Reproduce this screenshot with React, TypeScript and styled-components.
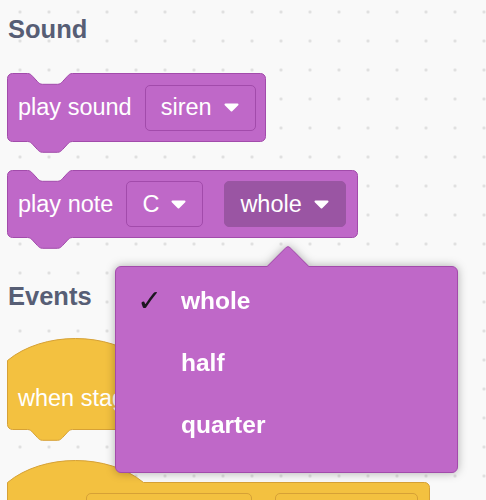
import styled, { createGlobalStyle } from "styled-components";

const GlobalStyle = createGlobalStyle`
  body {
    margin: 0;
    background: #f9f9f9;
    font-family: "Liberation Sans", Arial, sans-serif;
  }
`;

const colors = {
  purple: "#bf68c8",
  purpleLine: "#a24bab",
  purpleDark: "#9a55a3",
  yellow: "#f3c140",
  yellowLine: "#d6a136",
  heading: "#575e75",
};

// scratch-blocks puzzle notch, scaled
const SX = 1.25;
const SY = 1.35;
const NOTCH_START = 20;
const NOTCH_W = 36 * SX;
const R = 5;
const HAT_W = 136;

function notch(dir: 1 | -1) {
  const x = (v: number) => (v * SX * dir).toFixed(2);
  const y = (v: number) => (v * SY).toFixed(2);
  return `c ${x(2)},0 ${x(3)},${y(1)} ${x(4)},${y(2)} l ${x(4)},${y(4)} c ${x(1)},${y(1)} ${x(2)},${y(2)} ${x(4)},${y(2)} h ${x(12)} c ${x(2)},0 ${x(3)},${y(-1)} ${x(4)},${y(-2)} l ${x(4)},${y(-4)} c ${x(1)},${y(-1)} ${x(2)},${y(-2)} ${x(4)},${y(-2)}`;
}

function bottom(w: number, h: number) {
  return `V ${h - R} A ${R} ${R} 0 0 1 ${w - R} ${h} H ${NOTCH_START + NOTCH_W} ${notch(-1)} H ${R} A ${R} ${R} 0 0 1 0 ${h - R} Z`;
}

function stackPath(w: number, h: number) {
  return `M 0 ${R} A ${R} ${R} 0 0 1 ${R} 0 H ${NOTCH_START} ${notch(1)} H ${w - R} A ${R} ${R} 0 0 1 ${w} ${R} ${bottom(w, h)}`;
}

function hatPath(w: number, h: number, hat: number) {
  const k = hat / 0.75;
  return `M 0 ${hat} c ${(HAT_W * 25) / 96},${-k} ${(HAT_W * 71) / 96},${-k} ${HAT_W},0 H ${w - R} A ${R} ${R} 0 0 1 ${w} ${hat + R} ${bottom(w, h)}`;
}

const Page = styled.div`
  position: relative;
  width: 486px;
  height: 500px;
  overflow: hidden;
  box-sizing: border-box;
  padding: 14px 0 0 7px;
  display: flex;
  flex-direction: column;
  align-items: flex-start;
  background-color: #f9f9f9;
  background-image: radial-gradient(circle, #dcdcdc 1.1px, transparent 1.7px);
  background-size: 29px 29px;
  background-position: 5.5px -2.5px;
`;

const Heading = styled.h2<{ $mt: number }>`
  margin: ${(p) => p.$mt}px 0 0 1px;
  font-size: 25.5px;
  line-height: 30px;
  font-weight: 700;
  color: ${colors.heading};
`;

const Block = styled.div<{ $w: number; $h: number; $mt: number; $hat?: number }>`
  position: relative;
  width: ${(p) => p.$w}px;
  height: ${(p) => p.$h}px;
  margin-top: ${(p) => p.$mt}px;
  padding: ${(p) => p.$hat || 0}px 11px 0;
  box-sizing: border-box;
  flex-shrink: 0;
`;

const Shape = styled.svg`
  position: absolute;
  top: 0;
  left: 0;
  overflow: visible;
`;

const Row = styled.div`
  position: relative;
  height: 100%;
  display: flex;
  align-items: center;
  gap: 13px;
  color: #fff;
  font-size: 23.5px;
  white-space: nowrap;
`;

const Label = styled.span<{ $dy?: number }>`
  position: relative;
  top: ${(p) => p.$dy || 0}px;
`;

const Field = styled.div<{ $tone: "purple" | "dark" | "yellow"; $w?: number; $ml?: number }>`
  display: flex;
  align-items: center;
  gap: 12px;
  height: 46px;
  box-sizing: border-box;
  width: ${(p) => (p.$w ? `${p.$w}px` : "auto")};
  margin-left: ${(p) => p.$ml || 0}px;
  padding: 0 16px 0 15px;
  border-radius: 5px;
  border: 1px solid
    ${(p) =>
      p.$tone === "dark" ? colors.purpleDark : p.$tone === "yellow" ? colors.yellowLine : colors.purpleLine};
  background: ${(p) =>
    p.$tone === "dark" ? colors.purpleDark : p.$tone === "yellow" ? colors.yellow : colors.purple};
`;

const Menu = styled.div`
  position: absolute;
  left: 115px;
  top: 266px;
  width: 343px;
  height: 207px;
  box-sizing: border-box;
  padding: 3px 0;
  background: ${colors.purple};
  border: 1px solid ${colors.purpleLine};
  border-radius: 6px;
  filter: drop-shadow(0 0 5px rgba(0, 0, 0, 0.3));
`;

const Arrow = styled.div`
  position: absolute;
  left: 157px;
  top: -16px;
  width: 30px;
  height: 30px;
  box-sizing: border-box;
  background: ${colors.purple};
  border-top: 1px solid ${colors.purpleLine};
  border-left: 1px solid ${colors.purpleLine};
  border-top-left-radius: 4px;
  transform: rotate(45deg);
`;

const Item = styled.div`
  position: relative;
  height: 62px;
  display: flex;
  align-items: center;
  padding-left: 21px;
  font-size: 24.5px;
  font-weight: 700;
  color: #fff;
`;

const Check = styled.span`
  width: 44px;
  font-family: "DejaVu Sans", sans-serif;
  font-weight: 400;
  font-size: 30px;
  line-height: 1;
  color: #1c1620;
`;

function Caret() {
  return (
    <svg width="15" height="9" viewBox="0 0 15 9">
      <path
        d="M1.5 1.5 L13.5 1.5 L7.5 7.5 Z"
        fill="#fff"
        stroke="#fff"
        strokeWidth="2"
        strokeLinejoin="round"
      />
    </svg>
  );
}

function BlockShape(props: { w: number; h: number; hat?: number; fill: string; stroke: string }) {
  const { w, h, hat, fill, stroke } = props;
  const d = hat ? hatPath(w - 1, h - 1, hat) : stackPath(w - 1, h - 1);
  return (
    <Shape width={w + 2} height={h + 16}>
      <path transform="translate(0.5 0.5)" d={d} fill={fill} stroke={stroke} />
    </Shape>
  );
}

const notes = ["whole", "half", "quarter"];

export default function App() {
  return (
    <Page>
      <GlobalStyle />
      <Heading $mt={0}>Sound</Heading>
      <Block $w={259} $h={69} $mt={29}>
        <BlockShape w={259} h={69} fill={colors.purple} stroke={colors.purpleLine} />
        <Row>
          <Label>play sound</Label>
          <Field $tone="purple">
            siren <Caret />
          </Field>
        </Row>
      </Block>
      <Block $w={351} $h={68} $mt={28}>
        <BlockShape w={351} h={68} fill={colors.purple} stroke={colors.purpleLine} />
        <Row>
          <Label>play note</Label>
          <Field $tone="purple">
            C <Caret />
          </Field>
          <Field $tone="dark" $ml={8}>
            whole <Caret />
          </Field>
        </Row>
      </Block>

      <Heading $mt={43}>Events</Heading>
      <Block $w={300} $h={92} $mt={27} $hat={22}>
        <BlockShape w={300} h={92} hat={22} fill={colors.yellow} stroke={colors.yellowLine} />
        <Row>
          <Label $dy={3}>when stage clicked</Label>
        </Row>
      </Block>
      <Block $w={423} $h={90} $mt={30} $hat={22}>
        <BlockShape w={423} h={90} hat={22} fill={colors.yellow} stroke={colors.yellowLine} />
        <Row>
          <Field $tone="yellow" $w={166} $ml={68} />
          <Field $tone="yellow" $w={143} $ml={10} />
        </Row>
      </Block>

      <Menu>
        <Arrow />
        {notes.map((n, i) => (
          <Item key={n}>
            <Check>{i === 0 ? "✓" : ""}</Check>
            {n}
          </Item>
        ))}
      </Menu>
    </Page>
  );
}
